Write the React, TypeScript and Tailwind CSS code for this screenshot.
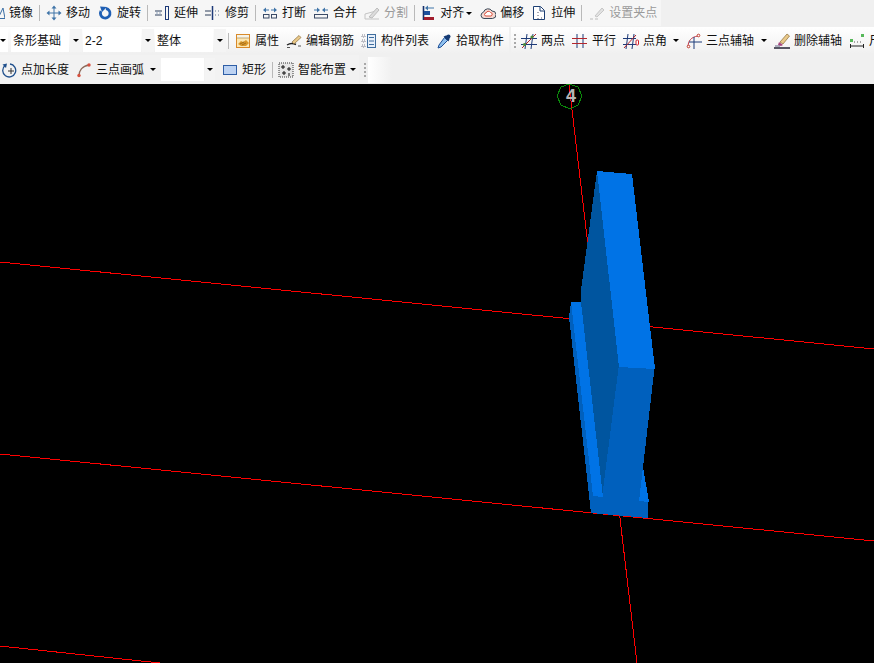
import type { ReactNode } from "react";

const Ic = ({ children, w = 16 }: { children: ReactNode; w?: number }) => (
  <svg width={w} height={16} viewBox={`0 0 ${w} 16`} fill="none" className="shrink-0 block">
    {children}
  </svg>
);

const Item = ({ icon, label, gray }: { icon: ReactNode; label: string; gray?: boolean }) => (
  <div className={`flex items-center shrink-0 gap-[4px] mr-[7px] ${gray ? "text-[#9a9a9a]" : "text-[#111]"}`}>
    {icon}
    <span className="whitespace-nowrap shrink-0">{label}</span>
  </div>
);

const Sep = ({ className = "-ml-px mr-[6px]" }: { className?: string }) => (
  <div className={`w-px h-[16px] bg-[#b9b9b9] shrink-0 ${className}`} />
);

const Caret = ({ className = "" }: { className?: string }) => (
  <div className={`w-0 h-0 shrink-0 border-x-[3px] border-t-[3px] border-x-transparent border-t-black ${className}`} />
);

const Gripper = ({ className = "" }: { className?: string }) => (
  <div className={`flex flex-col gap-[2px] shrink-0 ${className}`}>
    {[0, 1, 2, 3].map((i) => (
      <div key={i} className="w-[2px] h-[2px] bg-[#a8a8a8]" />
    ))}
  </div>
);

const Combo = ({ label, className = "w-[72px]", box = "w-[58px]" }: { label: string; className?: string; box?: string }) => (
  <div className={`flex h-[23px] shrink-0 ${className}`}>
    <div className={`bg-white h-full pl-[2px] flex items-center whitespace-nowrap text-[#111] ${box}`}>{label}</div>
    <div className="flex-1 ml-px mr-px bg-[#f4f4f4] flex items-center justify-center">
      <Caret />
    </div>
  </div>
);

const blue = "#3f74a8";
const navy = "#1d3a78";
const red = "#c0392b";

const icons = {
  mirror: (
    <Ic w={5}>
      <path d="M-2 13.500 L3 3 L5 13.500 Z" stroke="#3a6ea5" />
    </Ic>
  ),
  move: (
    <Ic>
      <path d="M8 2v12M2 8h12" stroke={blue} />
      <path d="M8 .5l2.500 3h-5zM8 15.500l2.500-3h-5zM.5 8l3-2.500v5zM15.500 8l-3-2.500v5z" fill={blue} />
    </Ic>
  ),
  rotate: (
    <Ic>
      <path d="M9 3.500a4.800 4.800 0 1 1-5 2.500" stroke="#1f5fb4" strokeWidth="2.800" />
      <path d="M3 1.500l7 .5-5 5z" fill="#1f5fb4" />
    </Ic>
  ),
  extend: (
    <Ic>
      <path d="M1 6h7M1 10h7" stroke="#2f3f5a" />
      <path d="M3 6v4M6 6v4" stroke="#8fa0b8" />
      <rect x="11.500" y="1.500" width="3" height="13" stroke={navy} />
    </Ic>
  ),
  trim: (
    <Ic>
      <path d="M0 6h6M0 10h6" stroke="#2f3f5a" />
      <path d="M7.500 1v14" stroke={navy} strokeWidth="1.500" />
      <path d="M10 6h1M13 6h1M10 10h1M13 10h1" stroke="#5f7390" />
    </Ic>
  ),
  breakIt: (
    <Ic>
      <path d="M1 5l3-2.500v5zM15 5l-3-2.500v5z" fill={blue} />
      <path d="M4 5h3M9 5h3" stroke={blue} />
      <rect x="1.500" y="9.500" width="5.500" height="3.500" stroke="#3a4a66" />
      <rect x="9.500" y="9.500" width="5" height="3.500" stroke="#3a4a66" />
    </Ic>
  ),
  merge: (
    <Ic>
      <path d="M7 5L4 2.500v5zM9 5l3-2.500v5z" fill={blue} />
      <path d="M1 5h3M12 5h3" stroke={blue} />
      <rect x="1.500" y="9.500" width="13" height="3.500" stroke="#3a4a66" />
    </Ic>
  ),
  split: (
    <Ic>
      <path d="M1 14h14M1 14V9l11-3" stroke="#c4c4c4" />
      <path d="M5 12l8-9 2 2-7 8z" fill="#dcdcdc" stroke="#bdbdbd" />
    </Ic>
  ),
  align: (
    <Ic w={14}>
      <path d="M1.500 1v14" stroke="#14306b" strokeWidth="1.600" />
      <rect x="2" y="12" width="10" height="3" fill="#a01c2c" />
      <rect x="2" y="6" width="6" height="4" fill="#1c4f9c" />
      <path d="M6 3h6" stroke={blue} />
      <path d="M3 3l3-2.500v5z" fill={blue} />
    </Ic>
  ),
  offset: (
    <Ic>
      <path d="M4 13.500a3.200 3.200 0 0 1-.5-6.300A4.700 4.700 0 0 1 12 6a3.700 3.700 0 0 1 .5 7.500z" stroke="#3a4a5a" fill="#f5d9d2" />
      <path d="M6 11a1.500 1.500 0 0 1 0-3 2.500 2.500 0 0 1 4.500-.5A1.800 1.800 0 0 1 11 11z" stroke="#d9503f" fill="#fff" />
    </Ic>
  ),
  stretch: (
    <Ic>
      <path d="M2.500 1.500h7l4 4v9h-11z" stroke="#1d3f73" fill="#fff" />
      <path d="M9 2v4h4" stroke="#1d3f73" />
      <path d="M7 7v1M7 10v1M7 13v1M10 13h1" stroke="#556" />
    </Ic>
  ),
  grip: (
    <Ic>
      <path d="M1 14h3M6 14h3" stroke="#bcbcbc" />
      <path d="M6 11l7-8 2 2-7 7z" fill="#e2e2e2" stroke="#c6c6c6" />
    </Ic>
  ),
  prop: (
    <Ic>
      <rect x="1.500" y="1.500" width="13" height="13" fill="#fde7b2" stroke="#d88a2a" />
      <path d="M2 2h12v3H2z" fill="#f6f3e8" />
      <path d="M2 5h12" stroke="#a88a55" strokeWidth=".7" />
      <path d="M3 11l3-3 2 1 3-2 3 3-3 3H6z" fill="#d9982d" />
      <path d="M5 11l4-2M7 12l4-2" stroke="#8a5a14" strokeWidth=".7" />
    </Ic>
  ),
  rebar: (
    <Ic>
      <path d="M1 12c3-2 6-2 9-.5" stroke="#222" strokeWidth="1.400" />
      <path d="M6 9l7-6.500 2 2-7 6.500z" fill="#e9c98a" stroke="#8b6b36" strokeWidth=".7" />
      <path d="M1 14.500h3M12 13h3" stroke="#555" />
    </Ic>
  ),
  list: (
    <Ic>
      <path d="M1 2h3v2H1zM1 7h3v2H1zM1 12h3v2H1z" stroke="#667" strokeDasharray="1 1" strokeWidth=".8" />
      <rect x="6.500" y="1.500" width="8" height="13" fill="#e8f0fa" stroke="#3f6d9e" />
      <path d="M8 4.500h5M8 8h5M8 11.500h5" stroke="#3f6d9e" />
    </Ic>
  ),
  pick: (
    <Ic>
      <path d="M8.500 4.500l3 3-6.500 6.500-3 1 1-3z" fill="#8fc0ee" stroke="#1e4f96" />
      <path d="M7.500 3.500l5 5 1-2.500a3 3 0 0 0-3.500-3.500z" fill="#173b74" />
      <circle cx="12.500" cy="3.500" r="2" fill="#173b74" />
    </Ic>
  ),
  twoPoint: (
    <Ic>
      <path d="M6 1L4 16M12 1l-2 15M0 5.500h16M0 11.500h16" stroke={navy} />
      <path d="M1 15L15 1" stroke="#b3262d" />
      <circle cx="3.500" cy="11.500" r="1.600" fill="#4c8c3a" />
      <circle cx="11" cy="4" r="1.600" fill="#4c8c3a" />
    </Ic>
  ),
  parallel: (
    <Ic>
      <path d="M5 1v14M11 1v14" stroke={navy} />
      <path d="M0 5.500h15M0 10.500h15" stroke="#b3262d" />
    </Ic>
  ),
  angle: (
    <Ic>
      <path d="M5 1L3 16M11 1L9 16M0 5.500h13M0 11.500h13" stroke={navy} />
      <path d="M1 15L13 2" stroke="#b3262d" />
      <rect x="13" y="7" width="2.500" height="5" rx="1" fill="#fff" stroke="#d0202a" />
    </Ic>
  ),
  threeAxis: (
    <Ic>
      <path d="M2 14c0-6 3-10 10-11" stroke="#c0394a" />
      <path d="M8 4v12M3 9h13" stroke={navy} />
      <circle cx="2.500" cy="13.500" r="1.300" fill="#fff" stroke={red} />
      <circle cx="12.500" cy="2.500" r="1.300" fill="#fff" stroke={red} />
    </Ic>
  ),
  erase: (
    <Ic>
      <path d="M6 9l7-8 2.500 2-6.500 8z" fill="#e9c98a" stroke="#8b6b36" strokeWidth=".7" />
      <path d="M5 9l4 3-2 1-3-1z" fill="#a8447c" />
      <path d="M0 15h16" stroke="#223" strokeWidth="1.500" />
      <path d="M1 13h5" stroke="#668" />
    </Ic>
  ),
  dim: (
    <Ic>
      <rect x="1" y="6" width="3" height="3" fill="#57b85a" />
      <rect x="12" y="1" width="3" height="3" fill="#57b85a" />
      <path d="M1.500 11v4M14.500 11v4M1.500 13h13" stroke="#222" />
      <path d="M8 9h1M11 9h1M5 9h1" stroke="#555" />
    </Ic>
  ),
  pointLen: (
    <Ic>
      <path d="M4 3.500a6.500 6.500 0 1 0 5-1.500" stroke="#1f4f8c" strokeWidth="1.300" />
      <path d="M1.500 2.500L6 1.500 5 6z" fill="#1f4f8c" />
      <path d="M10 6v6M7 9h6" stroke="#333" />
    </Ic>
  ),
  arc: (
    <Ic>
      <path d="M3 14c0-5 3-10 10-11" stroke="#8c6a5a" strokeWidth="1.400" />
      <circle cx="3" cy="13.500" r="1.700" fill="#d6503f" />
      <circle cx="13" cy="3" r="1.700" fill="#d6503f" />
    </Ic>
  ),
  rect: (
    <Ic>
      <rect x="1.500" y="3.500" width="13" height="9" fill="#bcd2f2" stroke="#2e5ea6" />
    </Ic>
  ),
  smart: (
    <Ic>
      <rect x="1" y="1" width="14" height="14" fill="#e6e6e6" stroke="#333" strokeDasharray="1 1" />
      <path d="M5 3v4M3 5h4M11 5v4M9 7h4M6 9v4M4 11h4M11 11v3" stroke="#111" />
    </Ic>
  ),
};

const Scene = () => (
  <svg className="block w-full h-full" viewBox="0 84 874 579" shapeRendering="crispEdges">
    <g stroke="#ff0000" strokeWidth="1">
      <path d="M0 262L874 349" />
      <path d="M0 454L874 541" />
      <path d="M0 646L160 663" />
      <path d="M569 84L637 663" />
    </g>
    <polygon
      points="569,84 578,87 582,96 578,105 570,109 561,105 557,96 561,87"
      fill="none"
      stroke="#0b8a0b"
    />
    <text
      x="571"
      y="102"
      textAnchor="middle"
      fontSize="18"
      fontWeight="700"
      fill="#b5b5b5"
      fontFamily="'Liberation Sans', sans-serif"
    >
      4
    </text>
    {/* dark back face */}
    <polygon points="597,171 619,366 603,492 603,497 581,302 581,290" fill="#00559f" />
    {/* front face */}
    <polygon
      points="619,364 655,364 643,467 639,501 648,502 648,518 591,513 593,496 603,497 603,490"
      fill="#0060bd"
    />
    {/* bright top face */}
    <polygon points="597,171 632,174 655,369 619,367" fill="#0073e6" />
    <polygon points="643,467 649,502 639,501" fill="#0073e6" />
    {/* footing strip */}
    <polygon points="569,317 571,302 593,496 591,513" fill="#0060bd" />
    <polygon points="571,302 581,302 603,497 593,496" fill="#0073e6" />
  </svg>
);

export default function App() {
  return (
    <div className="w-[874px] h-[663px] flex flex-col overflow-hidden bg-black text-[12px] leading-none font-['Liberation_Sans','Noto_Sans_CJK_SC',sans-serif]">
      <div className="h-[84px] bg-[#f0f0f0] shrink-0 flex flex-col">
        <div className="h-[26px] w-[661px] bg-[#f6f6f6] flex items-center shrink-0">
          <div className="w-[5px] mr-[4px] shrink-0">{icons.mirror}</div>
          <span className="text-[#111] mr-[7px] shrink-0 whitespace-nowrap">镜像</span>
          <Sep />
          <Item icon={icons.move} label="移动" />
          <Item icon={icons.rotate} label="旋转" />
          <Sep />
          <Item icon={icons.extend} label="延伸" />
          <Item icon={icons.trim} label="修剪" />
          <Sep />
          <Item icon={icons.breakIt} label="打断" />
          <Item icon={icons.merge} label="合并" />
          <Item icon={icons.split} label="分割" gray />
          <Sep className="-ml-px mr-[7px]" />
          <Item icon={icons.align} label="对齐" />
          <Caret className="-ml-[5px] mr-[8px]" />
          <Item icon={icons.offset} label="偏移" />
          <Item icon={icons.stretch} label="拉伸" />
          <Sep className="-ml-px mr-[7px]" />
          <Item icon={icons.grip} label="设置夹点" gray />
        </div>
        <div className="h-[27px] mt-px flex shrink-0">
          <div className="w-[509px] bg-gradient-to-b from-white to-[#f0f0f0] flex items-center shrink-0">
            <div className="w-[8px] h-[23px] bg-white flex items-center mr-[3px] shrink-0">
              <Caret />
            </div>
            <Combo label="条形基础" />
            <Combo label="2-2" />
            <Combo label="整体" />
            <Sep className="ml-[1px] mr-[6px]" />
            <Item icon={icons.prop} label="属性" />
            <Item icon={icons.rebar} label="编辑钢筋" />
            <Item icon={icons.list} label="构件列表" />
            <Item icon={icons.pick} label="拾取构件" />
          </div>
          <div className="ml-[2px] flex-1 bg-gradient-to-b from-white to-[#f0f0f0] flex items-center pl-[3px] overflow-hidden">
            <Gripper className="mr-[5px]" />
            <Item icon={icons.twoPoint} label="两点" />
            <Item icon={icons.parallel} label="平行" />
            <Item icon={icons.angle} label="点角" />
            <Caret className="-ml-px mr-[7px]" />
            <Item icon={icons.threeAxis} label="三点辅轴" />
            <Caret className="mr-[7px]" />
            <Item icon={icons.erase} label="删除辅轴" />
            <Item icon={icons.dim} label="尺" />
          </div>
        </div>
        <div className="flex-1 mt-px flex items-center">
          <div className="w-[359px] h-full bg-[#f2f2f2] flex items-center pl-[1px] shrink-0">
            <Item icon={icons.pointLen} label="点加长度" />
            <Item icon={icons.arc} label="三点画弧" />
            <Caret className="-ml-px mr-[5px]" />
            <Combo label="" className="w-[55px] mr-[6px]" box="w-[43px]" />
            <Item icon={icons.rect} label="矩形" />
            <Sep className="-ml-px mr-[5px]" />
            <Item icon={icons.smart} label="智能布置" />
            <Caret className="-ml-[3px]" />
          </div>
          <Gripper className="ml-[5px] mr-[2px]" />
          <div className="w-[24px] h-[26px] bg-gradient-to-r from-white to-[#f0f0f0]" />
        </div>
      </div>
      <div className="flex-1 bg-black">
        <Scene />
      </div>
    </div>
  );
}
